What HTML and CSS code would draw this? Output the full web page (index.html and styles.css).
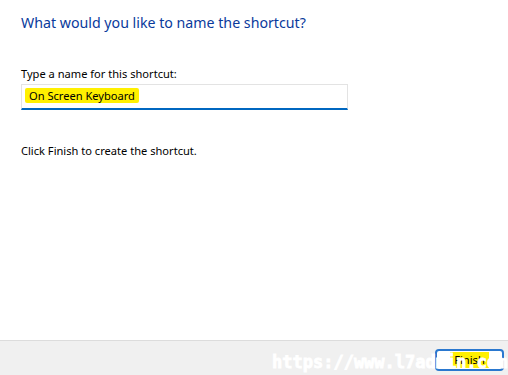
FILE: index.html
```html
<!DOCTYPE html>
<html lang="en">
<head>
<meta charset="utf-8">
<title>Create Shortcut</title>
<link rel="stylesheet" href="styles.css">
</head>
<body>
<div class="page">
  <main class="main">
    <h1 class="title">What would you like to name the shortcut?</h1>
    <label class="label" for="name">Type a name for this shortcut:</label>
    <div class="input" id="name"><span class="mark">On Screen Keyboard</span></div>
    <p class="note">Click Finish to create the shortcut.</p>
  </main>
  <footer class="footer">
    <button class="btn" type="button"><span class="btn-mark">Finish</span></button>
  </footer>
  <div class="watermark">https://www.l7admin.com</div>
</div>
</body>
</html>
```

FILE: styles.css
```css
html, body {
  margin: 0;
  padding: 0;
  width: 508px;
  height: 375px;
  overflow: hidden;
  background: #ffffff;
}

.page {
  position: relative;
  width: 508px;
  height: 375px;
  display: flex;
  flex-direction: column;
  font-family: "Noto Sans", "Open Sans", sans-serif;
  color: #000000;
}

.main {
  height: 340px;
  box-sizing: border-box;
  padding: 13px 0 0 21px;
  display: flex;
  flex-direction: column;
  align-items: flex-start;
}

.title {
  margin: 0;
  font-size: 14.2px;
  line-height: 20px;
  font-weight: 400;
  color: #0a3a9c;
}

.label {
  margin-top: 33px;
  font-size: 11.1px;
  line-height: 16px;
}

.input {
  margin-top: 2px;
  width: 327px;
  height: 26px;
  box-sizing: border-box;
  border: 1px solid #e3e3e3;
  border-bottom: 2px solid #0067c0;
  padding: 2px 0 0 3px;
  font-size: 11.1px;
  line-height: 18px;
}

.mark {
  display: inline-block;
  background: #fff000;
  padding: 0 4px;
  line-height: 15px;
  border-radius: 2px;
}

.note {
  margin: 33px 0 0;
  font-size: 11.1px;
  line-height: 16px;
}

.footer {
  flex: 1;
  border-top: 1px solid #dcdcdc;
  background: #f0f0f0;
  display: flex;
  justify-content: flex-end;
  align-items: flex-start;
  padding: 8px 4px 0 0;
}

.btn {
  width: 69px;
  height: 22px;
  box-sizing: border-box;
  border: 2px solid #2a78cf;
  border-radius: 4px;
  background: #ffffff;
  font-family: "Noto Sans", "Open Sans", sans-serif;
  font-size: 11.1px;
  line-height: 14px;
  color: #000000;
  padding: 0;
  display: flex;
  align-items: center;
  justify-content: center;
}

.btn-mark {
  background: #fff000;
  padding: 1px 4px;
}

.watermark {
  position: absolute;
  left: 272px;
  top: 354px;
  font-family: "DejaVu Sans Mono", "Liberation Mono", monospace;
  font-weight: 700;
  font-size: 17px;
  line-height: 17px;
  color: #ffffff;
  -webkit-text-stroke: 0.8px #ffffff;
  white-space: nowrap;
  pointer-events: none;
}
```
